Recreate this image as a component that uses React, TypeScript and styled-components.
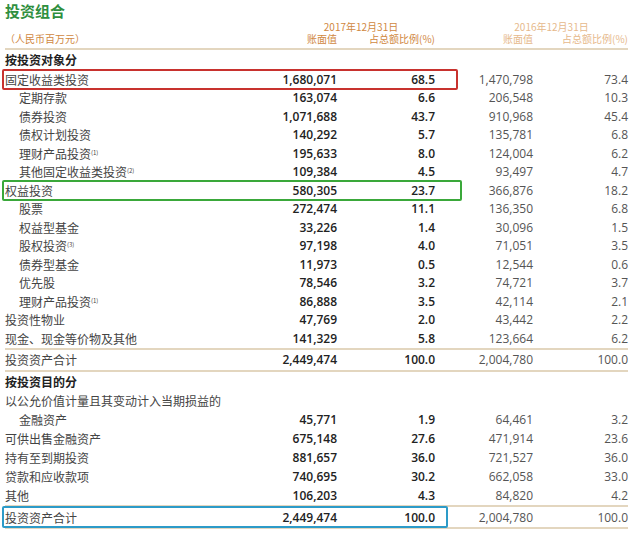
import React from 'react'
import styled, { createGlobalStyle, css } from 'styled-components'

const Global = createGlobalStyle`
  body { margin: 0; background: #fff; }
  * { box-sizing: border-box; }
`

const COLS = '1fr 90px 98px 98px 95px'

const Page = styled.div`
  width: 640px;
  padding: 1px 12px 0 5px;
  font-family: 'Noto Sans CJK SC', 'Noto Sans', sans-serif;
  color: #3a3a3a;
`

const Title = styled.div`
  font-size: 15px;
  font-weight: 700;
  color: #2f8f3e;
  height: 20px;
  line-height: 20px;
`

const Head = styled.div`
  display: grid;
  grid-template-columns: ${COLS};
  font-size: 10px;
  line-height: 12px;
  color: #d0883f;
  padding-bottom: 3px;
  border-bottom: 2px solid #e3d6bf;
  > span { text-align: right; }
  > span.year { grid-column: span 2; text-align: center; padding-left: 40px; }
  > span.old { color: #e6b98c; }
  > span.unit { text-align: left; }
`

const Section = styled.div`
  font-size: 12px;
  font-weight: 700;
  color: #222;
  height: 20px;
  line-height: 20px;
`

const Row = styled.div<{ $h?: number; $total?: boolean; $box?: string; $boxW?: number }>`
  position: relative;
  display: grid;
  grid-template-columns: ${COLS};
  height: ${p => p.$h ?? 18.5}px;
  align-items: center;
  font-size: 12px;
  ${p => p.$total && css`
    border-top: 2px solid #e3d6bf;
    border-bottom: 2px solid #e3d6bf;
  `}
  ${p => p.$box && css`
    &::after {
      content: '';
      position: absolute;
      left: -3px;
      top: -1px;
      bottom: -1px;
      width: ${p.$boxW}px;
      border: 2.5px solid ${p.$box};
      border-radius: 2px;
    }
  `}
`

const Label = styled.span<{ $indent?: boolean }>`
  padding-left: ${p => (p.$indent ? 14 : 0)}px;
  white-space: nowrap;
  color: #444;
  sup { font-size: 6px; vertical-align: 4px; }
`

const Num = styled.span<{ $old?: boolean }>`
  text-align: right;
  font-family: 'Open Sans', 'Noto Sans', sans-serif;
  font-weight: ${p => (p.$old ? 400 : 600)};
  color: ${p => (p.$old ? '#555' : '#222')};
  font-size: 12px;
`

type R = [string, string, string, string, string, boolean?, string?]

const part1: R[] = [
  ['定期存款', '163,074', '6.6', '206,548', '10.3', true],
  ['债券投资', '1,071,688', '43.7', '910,968', '45.4', true],
  ['债权计划投资', '140,292', '5.7', '135,781', '6.8', true],
  ['理财产品投资', '195,633', '8.0', '124,004', '6.2', true, '(1)'],
  ['其他固定收益类投资', '109,384', '4.5', '93,497', '4.7', true, '(2)'],
]
const part2: R[] = [
  ['股票', '272,474', '11.1', '136,350', '6.8', true],
  ['权益型基金', '33,226', '1.4', '30,096', '1.5', true],
  ['股权投资', '97,198', '4.0', '71,051', '3.5', true, '(3)'],
  ['债券型基金', '11,973', '0.5', '12,544', '0.6', true],
  ['优先股', '78,546', '3.2', '74,721', '3.7', true],
  ['理财产品投资', '86,888', '3.5', '42,114', '2.1', true, '(1)'],
  ['投资性物业', '47,769', '2.0', '43,442', '2.2'],
  ['现金、现金等价物及其他', '141,329', '5.8', '123,664', '6.2'],
]
const part3: R[] = [
  ['金融资产', '45,771', '1.9', '64,461', '3.2', true],
  ['可供出售金融资产', '675,148', '27.6', '471,914', '23.6'],
  ['持有至到期投资', '881,657', '36.0', '721,527', '36.0'],
  ['贷款和应收款项', '740,695', '30.2', '662,058', '33.0'],
  ['其他', '106,203', '4.3', '84,820', '4.2'],
]

const Line = ({ r, ...rest }: { r: R; $h?: number; $total?: boolean; $box?: string; $boxW?: number }) => (
  <Row {...rest}>
    <Label $indent={r[5]}>
      {r[0]}
      {r[6] && <sup>{r[6]}</sup>}
    </Label>
    <Num>{r[1]}</Num>
    <Num>{r[2]}</Num>
    <Num $old>{r[3]}</Num>
    <Num $old>{r[4]}</Num>
  </Row>
)

export default function App() {
  return (
    <Page>
      <Global />
      <Title>投资组合</Title>
      <Head>
        <span />
        <span className="year">2017年12月31日</span>
        <span className="year old">2016年12月31日</span>
        <span className="unit">（人民币百万元）</span>
        <span>账面值</span>
        <span>占总额比例(%)</span>
        <span className="old">账面值</span>
        <span className="old">占总额比例(%)</span>
      </Head>
      <Section>按投资对象分</Section>
      <Line r={['固定收益类投资', '1,680,071', '68.5', '1,470,798', '73.4']} $box="#c8322e" $boxW={452} />
      {part1.map(r => <Line key={r[0]} r={r} />)}
      <Line r={['权益投资', '580,305', '23.7', '366,876', '18.2']} $box="#3aa83a" $boxW={456} />
      {part2.map(r => <Line key={r[0] + r[1]} r={r} />)}
      <Line r={['投资资产合计', '2,449,474', '100.0', '2,004,780', '100.0']} $total $h={24} />
      <Section>按投资目的分</Section>
      <Row>
        <Label>以公允价值计量且其变动计入当期损益的</Label>
      </Row>
      {part3.map(r => <Line key={r[0]} r={r} $h={19} />)}
      <Line r={['投资资产合计', '2,449,474', '100.0', '2,004,780', '100.0']} $total $h={24} $box="#2d9bc8" $boxW={442} />
    </Page>
  )
}
